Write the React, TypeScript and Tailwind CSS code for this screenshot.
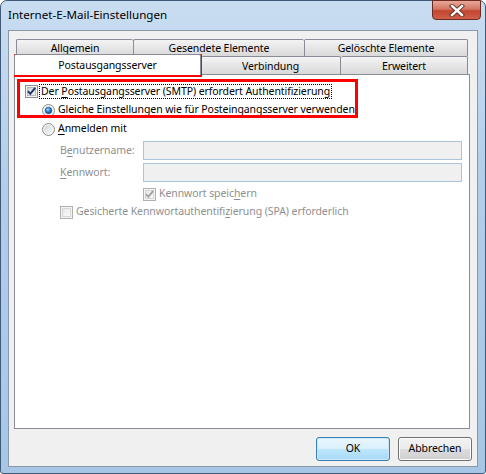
import React from 'react';

const Check = ({ disabled = false, checked = false }: { disabled?: boolean; checked?: boolean }) => (
  <svg width="13" height="13" viewBox="0 0 13 13" className="shrink-0">
    <defs>
      <linearGradient id={disabled ? 'cbd' : 'cbn'} x1="0" y1="0" x2="1" y2="1">
        <stop offset="0" stopColor={disabled ? '#e6e6e6' : '#cbcfd5'} />
        <stop offset="1" stopColor={disabled ? '#fbfbfb' : '#f7f7f7'} />
      </linearGradient>
    </defs>
    <rect x="0.5" y="0.5" width="12" height="12" fill="#f4f4f4" stroke={disabled ? '#b1b1b1' : '#8e8f8f'} />
    <rect x="2.5" y="2.5" width="8" height="8" fill={`url(#${disabled ? 'cbd' : 'cbn'})`} stroke={disabled ? '#d6d6d6' : '#b4b8be'} />
    {checked && (
      <path
        d="M3 6.2 L5.3 8.8 L10.2 2.8"
        fill="none"
        stroke={disabled ? '#a3a3a3' : '#1d3566'}
        strokeWidth="1.9"
      />
    )}
  </svg>
);

const Radio = ({ selected = false }: { selected?: boolean }) => (
  <svg width="13" height="13" viewBox="0 0 13 13" className="shrink-0">
    <defs>
      <linearGradient id="rbg" x1="0" y1="0" x2="1" y2="1">
        <stop offset="0" stopColor="#cfd2d6" />
        <stop offset="1" stopColor="#fbfbfb" />
      </linearGradient>
      <radialGradient id="rdot" cx="0.4" cy="0.35" r="0.7">
        <stop offset="0" stopColor="#9fdcff" />
        <stop offset="0.5" stopColor="#2b7ed0" />
        <stop offset="1" stopColor="#0c3f86" />
      </radialGradient>
    </defs>
    <circle cx="6.5" cy="6.5" r="6" fill="#f4f4f4" stroke="#8d8d8d" />
    <circle cx="6.5" cy="6.5" r="4.3" fill="url(#rbg)" />
    {selected && <circle cx="6.5" cy="6.5" r="3.3" fill="url(#rdot)" stroke="#1b4f8f" strokeWidth="0.6" />}
  </svg>
);

const tabBg = 'bg-[linear-gradient(to_bottom,#f4f4f4,#e6e6e6_50%,#d9d9d9)]';

export default function App() {
  return (
    <div className="relative w-[486px] h-[474px] overflow-hidden whitespace-nowrap font-['Noto_Sans',sans-serif] text-[10.5px] tracking-[-0.08px] text-black">
      <div className="flex h-full w-full flex-col rounded-t-[7px] rounded-b-[3px] border border-[#3f5a78] bg-[linear-gradient(to_bottom,#c9ddf1,#b2cdea_40%,#a7c6e6)]">
        {/* title bar */}
        <div className="flex h-[29px] shrink-0 items-start justify-between pl-[7px] pr-[4px]">
          <span className="mt-[5px] text-[11.6px] leading-[18px] tracking-normal">Internet-E-Mail-Einstellungen</span>
          <div className="-mt-px flex h-[20px] w-[49px] items-center justify-center rounded-b-[4px] border border-[#6b2a22] bg-[linear-gradient(to_bottom,#e9a899,#d47563_45%,#c2452f_55%,#d0604a)]">
            <svg width="16" height="13" viewBox="0 0 16 13">
              <path d="M3 2 L13 11 M13 2 L3 11" stroke="#5a2a24" strokeWidth="4.2" strokeLinecap="square" />
              <path d="M3 2 L13 11 M13 2 L3 11" stroke="#ffffff" strokeWidth="2.4" strokeLinecap="square" />
            </svg>
          </div>
        </div>

        {/* client area */}
        <div className="mx-[7px] flex h-[437px] shrink-0 flex-col border border-[#8a97a8] bg-[#f0f0f0]">
          <div className="pl-[5px] pr-[7px] pt-[8px]">
            {/* tab row 1 */}
            <div className="flex h-[17px] pl-[2px]">
              <div className={`flex w-[117px] items-center justify-center rounded-t-[2px] border-l border-t border-[#898c95] pt-[2px] ${tabBg}`}>Allgemein</div>
              <div className={`flex w-[171px] items-center justify-center rounded-t-[2px] border-l border-t border-[#898c95] pt-[2px] ${tabBg}`}>Gesendete Elemente</div>
              <div className={`flex w-[164px] items-center justify-center rounded-t-[2px] border-x border-t border-[#898c95] pt-[2px] ${tabBg}`}>Gelöschte Elemente</div>
            </div>
            {/* tab row 2 */}
            <div className="flex h-[18px]">
              <div className="relative z-10 -mt-[2px] flex h-[21px] w-[187px] items-center justify-center rounded-t-[2px] border-x border-t border-[#898c95] bg-white pt-[1px]">
                Postausgangsserver
              </div>
              <div className={`flex w-[140px] items-center justify-center rounded-t-[2px] border-r border-t border-[#898c95] pt-[2px] ${tabBg}`}>Verbindung</div>
              <div className={`flex w-[127px] items-center justify-center rounded-t-[2px] border-r border-t border-[#898c95] pt-[2px] ${tabBg}`}>Erweitert</div>
            </div>
            {/* panel */}
            <div className="flex h-[355px] flex-col border border-[#898c95] bg-white pt-[9px]">
              <div className="flex h-[15px] items-center pl-[10px]">
                <Check checked />
                <span className="ml-px border border-dotted border-black px-px leading-[13px]">
                  Der <u className="underline-offset-2">P</u>ostausgangsserver (SMTP) erfordert Authentifizierung
                </span>
              </div>
              <div className="mt-[2px] flex h-[18px] items-center pl-[27px]">
                <Radio selected />
                <span className="ml-[3px]">
                  <u className="underline-offset-2">G</u>leiche Einstellungen wie für Posteingangsserver verwenden
                </span>
              </div>
              <div className="mt-px flex h-[18px] items-center pl-[27px]">
                <Radio />
                <span className="ml-[3px]">
                  <u className="underline-offset-2">A</u>nmelden mit
                </span>
              </div>
              <div className="mt-[3px] flex h-[19px] items-center pl-[45px] text-[#8f8f8f]">
                <span className="w-[83px] shrink-0">
                  B<u className="underline-offset-2">e</u>nutzername:
                </span>
                <div className="h-full w-[319px] border border-[#abc3dc] bg-[#f0f0f0]" />
              </div>
              <div className="mt-[3px] flex h-[19px] items-center pl-[45px] text-[#8f8f8f]">
                <span className="w-[83px] shrink-0">
                  <u className="underline-offset-2">K</u>ennwort:
                </span>
                <div className="h-full w-[319px] border border-[#abc3dc] bg-[#f0f0f0]" />
              </div>
              <div className="mt-[4px] flex h-[16px] items-center pl-[128px] text-[#8f8f8f]">
                <Check disabled checked />
                <span className="ml-[3px]">
                  Kennwort speic<u className="underline-offset-2">h</u>ern
                </span>
              </div>
              <div className="mt-[2px] flex h-[16px] items-center pl-[45px] text-[#8f8f8f]">
                <Check disabled />
                <span className="ml-[3px]">
                  Gesicherte Kennwortauthentifi<u className="underline-offset-2">z</u>ierung (SPA) erforderlich
                </span>
              </div>
            </div>
          </div>

          {/* buttons */}
          <div className="mt-[8px] flex justify-end gap-[8px] pr-[5px]">
            <button className="h-[24px] w-[74px] rounded-[3px] border border-[#3c7fb1] bg-[linear-gradient(to_bottom,#eaf6fd,#d9f0fc_50%,#bee6fd_50%,#a7d9f5)] shadow-[inset_0_0_0_1px_#c6eafc]">
              OK
            </button>
            <button className="h-[24px] w-[74px] rounded-[3px] border border-[#707070] bg-[linear-gradient(to_bottom,#f2f2f2,#ebebeb_50%,#dddddd_50%,#cfcfcf)] shadow-[inset_0_0_0_1px_#fcfcfc]">
              Abbrechen
            </button>
          </div>
        </div>
      </div>

      {/* red annotation boxes */}
      <div className="pointer-events-none absolute left-[14px] top-[54px] h-[23px] w-[188px] border-[3px] border-[#ff0000]" />
      <div className="pointer-events-none absolute left-[17px] top-[79px] h-[39px] w-[341px] border-[3px] border-[#ff0000]" />
    </div>
  );
}
